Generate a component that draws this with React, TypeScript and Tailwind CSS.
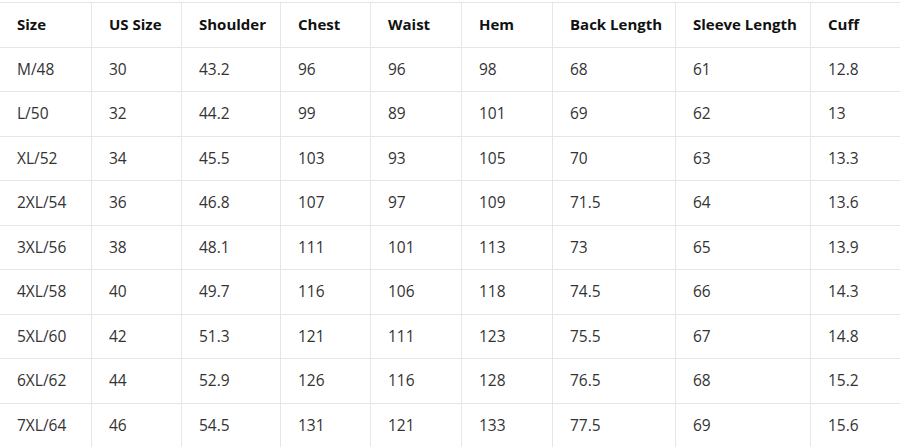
import React from "react";

const headers = ["Size", "US Size", "Shoulder", "Chest", "Waist", "Hem", "Back Length", "Sleeve Length", "Cuff"];
const widths = ["w-[91px]", "w-[90px]", "w-[99px]", "w-[90px]", "w-[91px]", "w-[91px]", "w-[123px]", "w-[135px]", "w-[90px]"];
const rows: string[][] = [
  ["M/48", "30", "43.2", "96", "96", "98", "68", "61", "12.8"],
  ["L/50", "32", "44.2", "99", "89", "101", "69", "62", "13"],
  ["XL/52", "34", "45.5", "103", "93", "105", "70", "63", "13.3"],
  ["2XL/54", "36", "46.8", "107", "97", "109", "71.5", "64", "13.6"],
  ["3XL/56", "38", "48.1", "111", "101", "113", "73", "65", "13.9"],
  ["4XL/58", "40", "49.7", "116", "106", "118", "74.5", "66", "14.3"],
  ["5XL/60", "42", "51.3", "121", "111", "123", "75.5", "67", "14.8"],
  ["6XL/62", "44", "52.9", "126", "116", "128", "76.5", "68", "15.2"],
  ["7XL/64", "46", "54.5", "131", "121", "133", "77.5", "69", "15.6"],
];

function Row({ cells, header }: { cells: string[]; header?: boolean }) {
  return (
    <div className="flex h-[44.5px] border-t border-[#e6e6e6]">
      {cells.map((c, i) => (
        <div
          key={i}
          className={`${widths[i]} shrink-0 flex items-center pl-[17px] ${i > 0 ? "border-l border-[#e6e6e6]" : ""} ${
            header ? "font-bold text-[15px] text-[#111] pb-[1px]" : "text-[15.5px] text-[#333]"
          }`}
        >
          {c}
        </div>
      ))}
    </div>
  );
}

export default function App() {
  return (
    <div className="w-[900px] h-[447px] overflow-hidden bg-white pt-[2px] font-['Open_Sans',sans-serif]">
      <Row cells={headers} header />
      {rows.map((r, i) => (
        <Row key={i} cells={r} />
      ))}
    </div>
  );
}
